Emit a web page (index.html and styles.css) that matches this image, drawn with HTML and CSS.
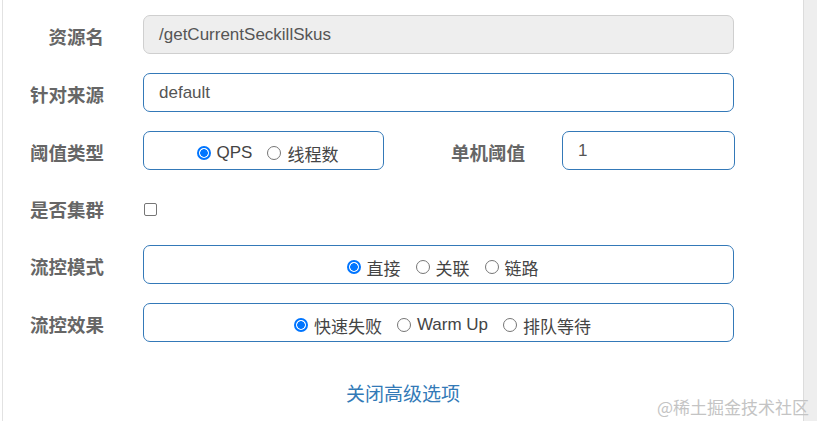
FILE: index.html
```html
<!DOCTYPE html>
<html lang="zh">
<head>
<meta charset="utf-8">
<link rel="stylesheet" href="styles.css">
</head>
<body>
<div class="panel">
  <form class="form">
    <div class="row">
      <label class="label">资源名</label>
      <div class="input disabled">/getCurrentSeckillSkus</div>
    </div>
    <div class="row">
      <label class="label">针对来源</label>
      <div class="input">default</div>
    </div>
    <div class="row">
      <label class="label">阈值类型</label>
      <div class="box box-small">
        <span class="opt"><span class="radio on"></span>QPS</span>
        <span class="opt"><span class="radio"></span>线程数</span>
      </div>
      <label class="label label-2">单机阈值</label>
      <div class="input input-small">1</div>
    </div>
    <div class="row row-check">
      <label class="label">是否集群</label>
      <span class="checkbox"></span>
    </div>
    <div class="row">
      <label class="label">流控模式</label>
      <div class="box">
        <span class="opt"><span class="radio on"></span>直接</span>
        <span class="opt"><span class="radio"></span>关联</span>
        <span class="opt"><span class="radio"></span>链路</span>
      </div>
    </div>
    <div class="row">
      <label class="label">流控效果</label>
      <div class="box">
        <span class="opt"><span class="radio on"></span>快速失败</span>
        <span class="opt"><span class="radio"></span>Warm Up</span>
        <span class="opt"><span class="radio"></span>排队等待</span>
      </div>
    </div>
  </form>
  <div class="link-row"><a class="link">关闭高级选项</a></div>
  <div class="watermark">@稀土掘金技术社区</div>
</div>
<div class="side"></div>
</body>
</html>
```
FILE: styles.css
```css
html, body {
  margin: 0;
  padding: 0;
  height: 100%;
}
body {
  display: flex;
  background: #fff;
  font-family: "Liberation Sans", "Noto Sans CJK SC", sans-serif;
  overflow: hidden;
}
.panel {
  position: relative;
  margin-left: 2px;
  width: 802px;
  height: 421px;
  box-sizing: border-box;
  border-left: 1px solid #e2e2e2;
  border-right: 1px solid #dcdcdc;
  background: #fff;
}
.side {
  flex: 1;
  background: #eeeeee;
}
.form {
  padding-top: 15px;
  padding-right: 69px;
  display: flex;
  flex-direction: column;
  gap: 19px;
}
.row {
  display: flex;
  align-items: center;
  height: 39px;
}
.row-check {
  height: 37px;
}
.label {
  width: 101px;
  margin-right: 39px;
  flex: none;
  text-align: right;
  font-size: 18.5px;
  font-weight: bold;
  color: #666;
  font-family: "Noto Sans CJK SC", sans-serif;
  line-height: 1;
  padding-top: 4px;
}
.label-2 {
  width: 141px;
  margin-right: 37px;
}
.input {
  flex: 1;
  height: 39px;
  box-sizing: border-box;
  border: 1px solid #3479b8;
  border-radius: 7px;
  padding: 0 15px;
  display: flex;
  align-items: center;
  font-size: 17px;
  color: #555;
}
.input.disabled {
  background: #eeeeee;
  border-color: #cfcfcf;
}
.input-small {
  flex: none;
  width: 173px;
}
.box {
  flex: 1;
  height: 39px;
  box-sizing: border-box;
  border: 1px solid #3479b8;
  border-radius: 7px;
  display: flex;
  align-items: center;
  justify-content: center;
  gap: 15px;
  font-size: 17px;
  color: #444;
  padding-left: 8px;
  padding-top: 5px;
}
.box-small {
  flex: none;
  width: 241px;
}
.opt {
  display: inline-flex;
  align-items: center;
  font-family: "Liberation Sans", "Noto Sans CJK SC", sans-serif;
}
.radio {
  width: 14px;
  height: 14px;
  box-sizing: border-box;
  border: 1px solid #767676;
  border-radius: 50%;
  margin-right: 6px;
  margin-top: -1px;
  background: #fff;
}
.radio.on {
  border: 2px solid #0075ff;
  background: radial-gradient(circle, #0075ff 0 3.5px, #fff 4.1px);
}
.checkbox {
  width: 13px;
  height: 13px;
  box-sizing: border-box;
  border: 1px solid #767676;
  border-radius: 2px;
  margin-left: 1px;
  margin-top: 3px;
}
.link-row {
  text-align: center;
  padding-top: 37px;
}
.link {
  color: #337ab7;
  font-size: 19px;
  font-family: "Noto Sans CJK SC", sans-serif;
  cursor: pointer;
}
.watermark {
  position: absolute;
  right: -6px;
  bottom: 2px;
  font-size: 17px;
  color: #c4c4c4;
  font-family: "Noto Sans CJK SC", sans-serif;
}
```
